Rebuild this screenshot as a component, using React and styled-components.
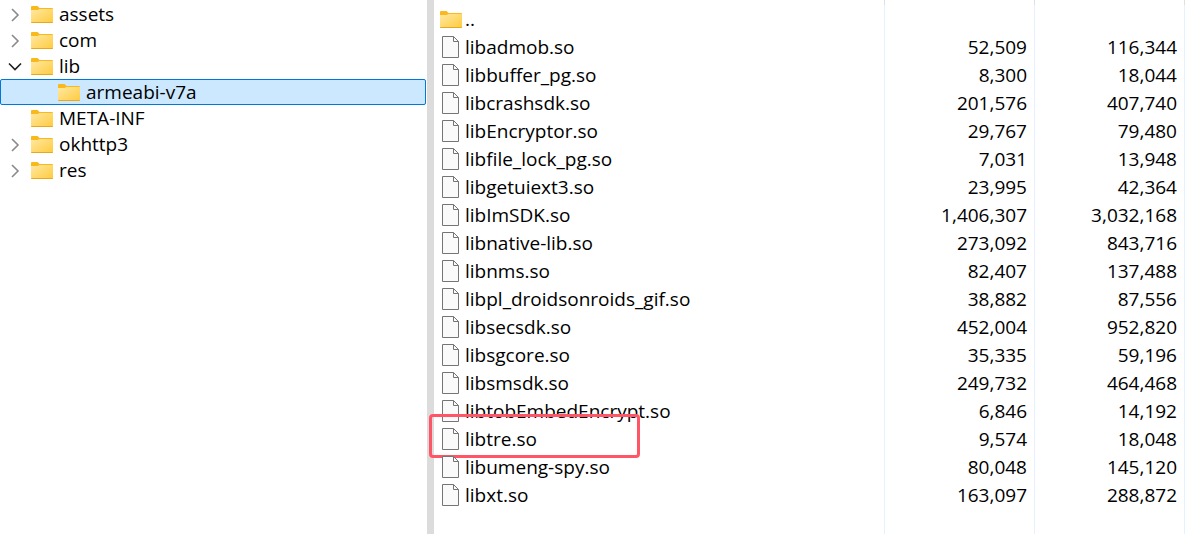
import React, { useId, useState } from 'react';
import styled, { createGlobalStyle } from 'styled-components';

const GlobalStyle = createGlobalStyle`
* {
    box-sizing: border-box;
}
body {
    margin: 0;
    background: #ffffff;
    color: #000000;
    font-family: "Open Sans", "Noto Sans", sans-serif;
    font-size: 19px;
}
`;

const Browser = styled.main`
display: flex;
min-height: 100vh;
overflow: hidden;
`;

const TreePane = styled.nav`
flex: 0 0 427px;
padding: 1px 1px 0 0;
`;

const Splitter = styled.div`
flex: 0 0 7px;
background: #dcdcdc;
`;

const ListPane = styled.section`
flex: 1;
min-width: 0;
`;

const TreeList = styled.ul`
list-style: none;
margin: 0;
padding: 0;
`;

const TreeRow = styled.div`
display: flex;
align-items: center;
height: 26px;
padding-left: ${props => props.$level * 27 + 3}px;
border: 1px solid ${props => props.$selected ? '#0078d7' : 'transparent'};
border-radius: 2px;
background: ${props => props.$selected ? '#cce8ff' : 'transparent'};
line-height: 24px;
`;

const Expander = styled.button`
display: flex;
align-items: center;
justify-content: center;
width: 21px;
height: 24px;
margin-right: 6px;
padding: 2px 0 0;
border: 0;
background: none;
color: ${props => props.$open ? '#1f1f1f' : '#8a8a8a'};
`;

const ExpanderGap = styled.span`
width: 27px;
`;

const TreeLabel = styled.span`
margin-left: 6px;
white-space: nowrap;
`;

const Table = styled.table`
width: 100%;
height: 100vh;
table-layout: fixed;
border-collapse: separate;
border-spacing: 0;
`;

const HeadCell = styled.th`
width: ${props => props.$width || 'auto'};
height: 5px;
padding: 0;
border-left: ${props => props.$width ? '1px solid #e0e0e0' : '0'};
`;

const Row = styled.tr`
height: ${props => props.$filler ? 'auto' : '28px'};
`;

const NameCell = styled.td`
position: relative;
padding: 0 6px;
line-height: 28px;
`;

const SizeCell = styled.td`
padding: 0 7px 0 0;
border-left: 1px solid #e5f1ff;
line-height: 28px;
text-align: right;
`;

const FileName = styled.div`
display: flex;
align-items: center;
gap: 3px;
height: 28px;
white-space: nowrap;
`;

const IconSlot = styled.span`
display: flex;
flex: 0 0 22px;
justify-content: center;
`;

const Marker = styled.div`
position: absolute;
top: -11px;
left: -5px;
width: 211px;
height: 44px;
border: 3px solid #ff5566;
border-radius: 4px;
pointer-events: none;
`;

const FolderIcon = () => {
    const id = useId();
    return (
        <svg width="22" height="17" viewBox="0 0 22 17" aria-hidden="true">
            <defs>
                <linearGradient id={id} x1="0" y1="0" x2="1" y2="1">
                    <stop offset="0" stopColor="#ffe8a3" />
                    <stop offset="1" stopColor="#ffcb3d" />
                </linearGradient>
            </defs>
            <path d="M0 1Q0 0 1 0H6.5L8.5 2H21Q22 2 22 3V9H0Z" fill="#f9b81c" />
            <path d="M0 4H6.5L8.5 3H22V16Q22 17 21 17H1Q0 17 0 16Z" fill={`url(#${id})`} />
            <path d="M0 16H22Q22 17 21 17H1Q0 17 0 16Z" fill="#e6a822" />
        </svg>
    );
};

const FileIcon = () => (
    <svg width="18" height="22" viewBox="0 0 18 22" aria-hidden="true">
        <path d="M.5 .5H11.5L16.5 5.5V21.5H.5Z" fill="#fafafa" stroke="#757575" />
        <path d="M11.5 .5V5.5H16.5" fill="none" stroke="#757575" />
    </svg>
);

const Chevron = ({ open }) => (
    <svg width="14" height="14" viewBox="0 0 14 14" fill="none" stroke="currentColor" strokeWidth="1.6" aria-hidden="true">
        <path d={open ? 'M1 3.5L7 9.5L13 3.5' : 'M4 1L10 7L4 13'} />
    </svg>
);

const tree = [
    { name: 'assets', expandable: true },
    { name: 'com', expandable: true },
    { name: 'lib', expandable: true, children: [{ name: 'armeabi-v7a' }] },
    { name: 'META-INF' },
    { name: 'okhttp3', expandable: true },
    { name: 'res', expandable: true },
];

const files = [
    { name: 'libadmob.so', packed: 52509, size: 116344 },
    { name: 'libbuffer_pg.so', packed: 8300, size: 18044 },
    { name: 'libcrashsdk.so', packed: 201576, size: 407740 },
    { name: 'libEncryptor.so', packed: 29767, size: 79480 },
    { name: 'libfile_lock_pg.so', packed: 7031, size: 13948 },
    { name: 'libgetuiext3.so', packed: 23995, size: 42364 },
    { name: 'libImSDK.so', packed: 1406307, size: 3032168 },
    { name: 'libnative-lib.so', packed: 273092, size: 843716 },
    { name: 'libnms.so', packed: 82407, size: 137488 },
    { name: 'libpl_droidsonroids_gif.so', packed: 38882, size: 87556 },
    { name: 'libsecsdk.so', packed: 452004, size: 952820 },
    { name: 'libsgcore.so', packed: 35335, size: 59196 },
    { name: 'libsmsdk.so', packed: 249732, size: 464468 },
    { name: 'libtobEmbedEncrypt.so', packed: 6846, size: 14192 },
    { name: 'libtre.so', packed: 9574, size: 18048, marked: true },
    { name: 'libumeng-spy.so', packed: 80048, size: 145120 },
    { name: 'libxt.so', packed: 163097, size: 288872 },
];

const formatSize = (value) => value.toLocaleString('en-US');

const TreeNode = ({ node, level, selected }) => {
    const [open, setOpen] = useState(!!node.children);
    return (
        <li>
            <TreeRow $level={level} $selected={node.name === selected}>
                {node.expandable
                    ? <Expander type="button" $open={open} aria-label={node.name} aria-expanded={open} onClick={() => setOpen(!open)}>
                        <Chevron open={open} />
                    </Expander>
                    : <ExpanderGap />}
                <FolderIcon />
                <TreeLabel>{node.name}</TreeLabel>
            </TreeRow>
            {open && node.children && (
                <TreeList>
                    {node.children.map(child => (
                        <TreeNode key={child.name} node={child} level={level + 1} selected={selected} />
                    ))}
                </TreeList>
            )}
        </li>
    );
};

const App = () => (
    <>
        <GlobalStyle />
        <Browser>
            <TreePane>
                <TreeList>
                    {tree.map(node => <TreeNode key={node.name} node={node} level={0} selected="armeabi-v7a" />)}
                </TreeList>
            </TreePane>
            <Splitter />
            <ListPane>
                <Table>
                    <thead>
                        <tr>
                            <HeadCell />
                            <HeadCell $width="150px" />
                            <HeadCell $width="150px" />
                            <HeadCell $width="5px" />
                        </tr>
                    </thead>
                    <tbody>
                        <Row>
                            <NameCell>
                                <FileName><IconSlot><FolderIcon /></IconSlot>..</FileName>
                            </NameCell>
                            <SizeCell />
                            <SizeCell />
                            <SizeCell />
                        </Row>
                        {files.map(file => (
                            <Row key={file.name}>
                                <NameCell>
                                    <FileName><IconSlot><FileIcon /></IconSlot>{file.name}</FileName>
                                    {file.marked && <Marker />}
                                </NameCell>
                                <SizeCell>{formatSize(file.packed)}</SizeCell>
                                <SizeCell>{formatSize(file.size)}</SizeCell>
                                <SizeCell />
                            </Row>
                        ))}
                        <Row $filler>
                            <NameCell />
                            <SizeCell />
                            <SizeCell />
                            <SizeCell />
                        </Row>
                    </tbody>
                </Table>
            </ListPane>
        </Browser>
    </>
);

export default App;
